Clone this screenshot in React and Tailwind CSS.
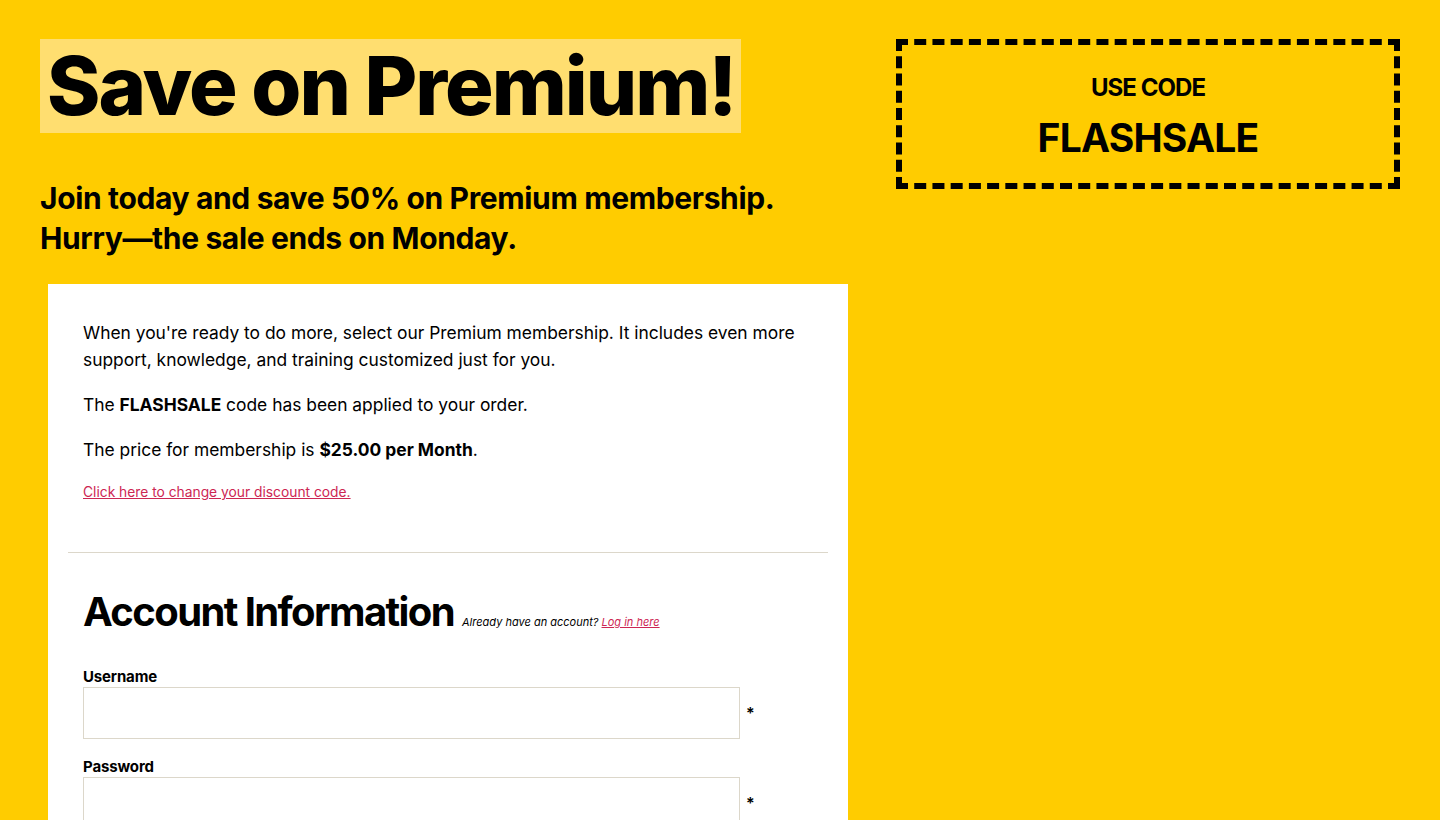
import React from "react";

const font = { fontFamily: "Inter, 'Noto Sans', sans-serif" };

const Field = ({ label, type = "text" }) => (
  <div className="mt-[18px] first:mt-0">
    <label className="block text-[15px] font-bold leading-5 text-black tracking-[-0.01em]">{label}</label>
    <div className="flex items-center">
      <input
        type={type}
        className="w-[657px] h-[52px] border border-[#dcd7ca] bg-white outline-none"
      />
      <span className="ml-[6px] text-[16px] font-semibold text-black">*</span>
    </div>
  </div>
);

const App = () => {
  return (
    <div className="min-h-screen bg-[#ffcc00] text-black" style={font}>
      <div className="flex gap-10 px-10 pt-[39px]">
        {/* left column */}
        <div className="w-[816px] shrink-0">
          <h1 className="inline-block bg-[#ffde70] pl-[7px] pr-[6px] text-[81px] leading-[94px] font-extrabold tracking-[-0.025em]">
            Save on Premium!
          </h1>
          <p className="mt-[45px] text-[30px] leading-[40px] font-bold tracking-[-0.012em]">
            Join today and save 50% on Premium membership.
            <br />
            Hurry—the sale ends on Monday.
          </p>

          <div className="mx-2 mt-[26px] bg-white p-5">
            <div className="px-[15px] pt-[15px] pb-[49px] text-[17.4px] leading-[27px]">
              <p>
                When you're ready to do more, select our Premium membership. It includes even more
                support, knowledge, and training customized just for you.
              </p>
              <p className="mt-[18px]">
                The <strong>FLASHSALE</strong> code has been applied to your order.
              </p>
              <p className="mt-[18px]">
                The price for membership is <strong>$25.00 per Month</strong>.
              </p>
              <p className="mt-[19px] text-[13.8px] leading-[21px]">
                <a href="#" className="text-[#cd2653] underline">
                  Click here to change your discount code.
                </a>
              </p>
            </div>
            <hr className="border-0 border-t border-[#dcd7ca]" />
            <div className="px-[15px] pt-[35px]">
              <div className="flex items-baseline">
                <h2 className="text-[40px] leading-[48px] font-bold tracking-[-0.04em]">
                  Account Information
                </h2>
                <span className="ml-2 text-[11px] italic">
                  Already have an account?{" "}
                  <a href="#" className="text-[#cd2653] underline">
                    Log in here
                  </a>
                </span>
              </div>
              <div className="mt-[31px]">
                <Field label="Username" />
                <Field label="Password" type="password" />
              </div>
            </div>
          </div>
        </div>

        {/* right column */}
        <div className="w-[504px] shrink-0">
          <div className="h-[150px] pt-[5px] border-[6px] border-dashed border-black flex flex-col items-center justify-center">
            <div className="text-[24px] leading-[30px] font-bold tracking-[-0.04em]">USE CODE</div>
            <div className="mt-[12px] text-[39px] leading-[46px] font-bold tracking-[-0.02em]">
              FLASHSALE
            </div>
          </div>
        </div>
      </div>
    </div>
  );
};

export default App;
